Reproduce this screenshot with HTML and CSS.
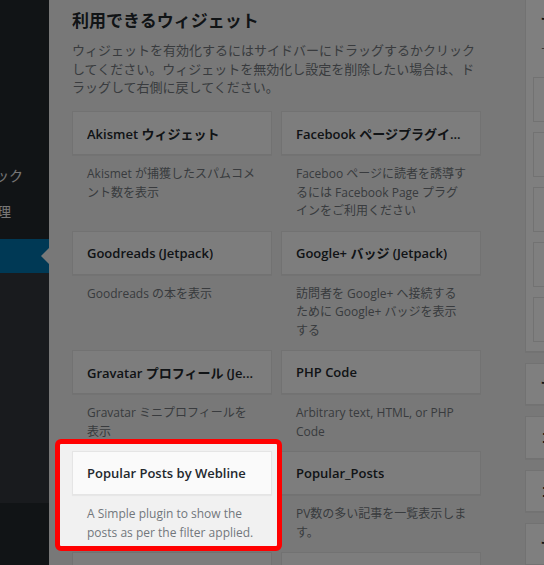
FILE: index.html
```html
<!DOCTYPE html>
<html lang="ja">
<head>
<meta charset="utf-8">
<title>ウィジェット</title>
<link rel="stylesheet" href="styles.css">
</head>
<body>
<div class="layout">
  <nav class="adminmenu">
    <div class="menu-spacer"></div>
    <div class="menu-item">フィードバック</div>
    <div class="menu-item short">コメント管理</div>
    <div class="menu-current"><span class="notch"></span></div>
    <div class="submenu"></div>
  </nav>
  <main class="content">
    <section class="available">
      <h2 class="section-title">利用できるウィジェット</h2>
      <p class="intro">ウィジェットを有効化するにはサイドバーにドラッグするかクリック<br>してください。ウィジェットを無効化し設定を削除したい場合は、ド<br>ラッグして右側に戻してください。</p>
      <div class="widget-grid">
        <div class="widget">
          <div class="widget-top"><h3>Akismet ウィジェット</h3></div>
          <div class="widget-desc">Akismet が捕獲したスパムコメ<br>ント数を表示</div>
        </div>
        <div class="widget">
          <div class="widget-top"><h3>Facebook ページプラグイ...</h3></div>
          <div class="widget-desc">Faceboo ページに読者を誘導す<br>るには Facebook Page プラグ<br>インをご利用ください</div>
        </div>
        <div class="widget">
          <div class="widget-top"><h3>Goodreads (Jetpack)</h3></div>
          <div class="widget-desc">Goodreads の本を表示</div>
        </div>
        <div class="widget">
          <div class="widget-top"><h3>Google+ バッジ (Jetpack)</h3></div>
          <div class="widget-desc">訪問者を Google+ へ接続する<br>ために Google+ バッジを表示<br>する</div>
        </div>
        <div class="widget">
          <div class="widget-top"><h3>Gravatar プロフィール (Je...</h3></div>
          <div class="widget-desc">Gravatar ミニプロフィールを<br>表示</div>
        </div>
        <div class="widget">
          <div class="widget-top"><h3>PHP Code</h3></div>
          <div class="widget-desc">Arbitrary text, HTML, or PHP<br>Code</div>
        </div>
        <div class="widget highlight">
          <div class="widget-top"><h3>Popular Posts by Webline</h3></div>
          <div class="widget-desc">A Simple plugin to show the<br>posts as per the filter applied.</div>
        </div>
        <div class="widget">
          <div class="widget-top"><h3>Popular_Posts</h3></div>
          <div class="widget-desc">PV数の多い記事を一覧表示しま<br>す。</div>
        </div>
        <div class="widget">
          <div class="widget-top"><h3>RSS</h3></div>
          <div class="widget-desc">RSS/Atom フィードのエントリー</div>
        </div>
        <div class="widget">
          <div class="widget-top"><h3>Twitter タイムライン</h3></div>
          <div class="widget-desc">ツイートを表示</div>
        </div>
      </div>
    </section>
    <aside class="sidebars">
      <div class="sidebar-panel open">
        <h2 class="panel-title">サイドバー</h2>
        <p class="panel-desc">サイドバーにウィジェットを追加</p>
        <div class="slot"></div>
        <div class="slot"></div>
        <div class="slot"></div>
        <div class="slot"></div>
        <div class="slot"></div>
      </div>
      <div class="sidebar-panel closed"><h2 class="panel-title">サイドバー 2</h2></div>
      <div class="sidebar-panel closed"><h2 class="panel-title">コンテンツ 1</h2></div>
      <div class="sidebar-panel closed"><h2 class="panel-title">コンテンツ 2</h2></div>
      <div class="sidebar-panel closed"><h2 class="panel-title">サイドバー 3</h2></div>
    </aside>
  </main>
</div>
<div class="overlay"></div>
</body>
</html>
```
FILE: styles.css
```css
html, body {
  margin: 0;
  height: 100%;
  overflow: hidden;
}
body {
  font-family: "Open Sans", "Noto Sans CJK JP", sans-serif;
  font-size: 13px;
  color: #444;
  background: #f1f1f1;
}
.layout {
  display: flex;
  height: 565px;
}

/* admin menu */
.adminmenu {
  width: 49px;
  flex: none;
  background: #23282d;
  display: flex;
  flex-direction: column;
  overflow: hidden;
}
.menu-spacer { height: 157px; flex: none; }
.menu-item {
  height: 36px;
  flex: none;
  display: flex;
  align-items: center;
  justify-content: flex-end;
  padding-right: 26px;
  white-space: nowrap;
  color: #eee;
  font-family: "Noto Sans CJK JP", sans-serif;
  font-size: 14px;
}
.menu-item.short { padding-right: 38px; }
.menu-current {
  margin-top: 10px;
  height: 34px;
  flex: none;
  background: #0073aa;
  display: flex;
  align-items: center;
  justify-content: flex-end;
}
.notch {
  width: 0;
  height: 0;
  border: 8px solid transparent;
  border-right-color: #f1f1f1;
}
.submenu {
  height: 230px;
  flex: none;
  background: #32373c;
}

/* content */
.content {
  flex: 1;
  min-width: 0;
  display: flex;
  gap: 44px;
  padding-left: 23px;
}
.available {
  width: 409px;
  flex: none;
  padding-top: 8px;
}
.section-title {
  margin: 0;
  font-family: "Noto Sans CJK JP", sans-serif;
  font-size: 17px;
  line-height: 24px;
  font-weight: 700;
  color: #23282d;
}
.intro {
  margin: 9px 0 14.5px;
  font-size: 13px;
  line-height: 18.5px;
  color: #72777c;
  white-space: nowrap;
}
.widget-grid {
  display: grid;
  grid-template-columns: 200px 200px;
  column-gap: 9px;
  row-gap: 10px;
}
.widget-top {
  height: 42px;
  border: 1px solid #e5e5e5;
  background: #fafafa;
  box-shadow: 0 1px 1px rgba(0,0,0,.04);
  display: flex;
  align-items: center;
  padding: 0 14px;
}
.widget-top h3 {
  margin: 0;
  font-size: 13px;
  font-weight: 600;
  color: #23282d;
  white-space: nowrap;
  overflow: hidden;
}
.widget-desc {
  padding: 10px 0 0 15px;
  font-size: 12px;
  line-height: 18.5px;
  color: #72777c;
  white-space: nowrap;
}

/* highlighted widget (tour frame) */
.widget.highlight {
  position: relative;
  z-index: 3;
}
.widget.highlight::before {
  content: "";
  position: absolute;
  top: -12px;
  left: -17px;
  right: -10px;
  bottom: -9px;
  border: 5px solid #ff0000;
  border-radius: 6px;
  background: #f1f1f1;
  z-index: -1;
}

/* sidebars column */
.sidebars {
  width: 260px;
  flex: none;
  display: flex;
  flex-direction: column;
  gap: 11px;
}
.sidebar-panel {
  background: #fff;
  border: 1px solid #e5e5e5;
  box-shadow: 0 1px 1px rgba(0,0,0,.04);
}
.sidebar-panel.open {
  border-top: 0;
  padding: 8px 0 9px 7px;
}
.panel-title {
  margin: 0;
  font-family: "Noto Sans CJK JP", sans-serif;
  font-size: 14px;
  font-weight: 700;
  line-height: 24px;
  color: #23282d;
  white-space: nowrap;
}
.open .panel-title { padding-left: 8px; }
.panel-desc {
  margin: 8.5px 0 17.5px;
  padding-left: 8px;
  line-height: 19px;
  color: #72777c;
  white-space: nowrap;
}
.slot {
  height: 43px;
  border: 1px solid #e5e5e5;
  background: #fff;
  margin-bottom: 10px;
}
.slot:last-child { margin-bottom: 0; }
.sidebar-panel.closed {
  height: 47px;
  display: flex;
  align-items: center;
  padding: 0 15px;
}

/* dimming overlay */
.overlay {
  position: fixed;
  inset: 0;
  background: rgba(0,0,0,.5);
  z-index: 2;
}
```
